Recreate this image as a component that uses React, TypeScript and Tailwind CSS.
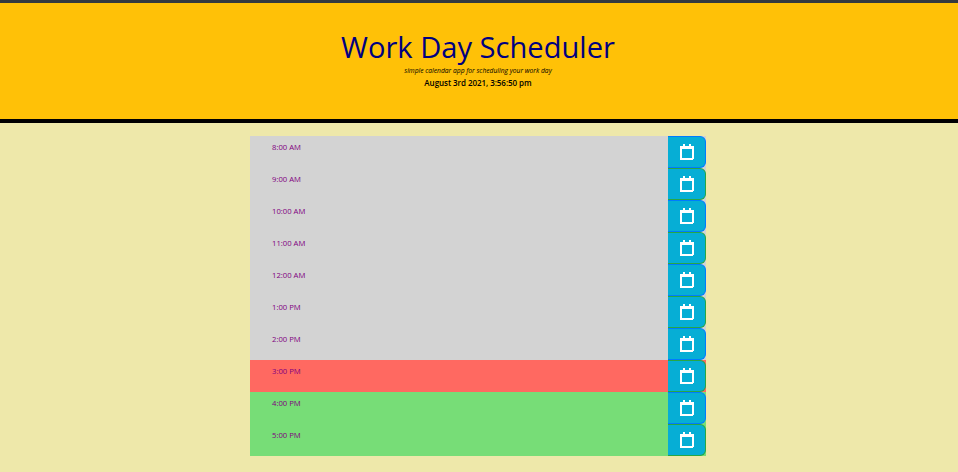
type Tense = "past" | "present" | "future";

const slots: { time: string; tense: Tense; border: string }[] = [
  { time: "8:00 AM", tense: "past", border: "border-[#007bff]" },
  { time: "9:00 AM", tense: "past", border: "border-[#28a745]" },
  { time: "10:00 AM", tense: "past", border: "border-[#007bff]" },
  { time: "11:00 AM", tense: "past", border: "border-[#28a745]" },
  { time: "12:00 AM", tense: "past", border: "border-[#007bff]" },
  { time: "1:00 PM", tense: "past", border: "border-[#28a745]" },
  { time: "2:00 PM", tense: "past", border: "border-[#007bff]" },
  { time: "3:00 PM", tense: "present", border: "border-[#28a745]" },
  { time: "4:00 PM", tense: "future", border: "border-[#007bff]" },
  { time: "5:00 PM", tense: "future", border: "border-[#28a745]" },
];

const tenseColor: Record<Tense, string> = {
  past: "bg-[#d3d3d3]",
  present: "bg-[#ff6961]",
  future: "bg-[#77dd77]",
};

function CalendarIcon() {
  return (
    <svg width="14" height="16" viewBox="0 0 14 16" fill="#fff" shapeRendering="crispEdges" aria-hidden="true">
      <path fillRule="evenodd" d="M0 2H3V0H5V2H9V0H11V2H14V15H13V16H0ZM2 5V14H12V5Z" />
    </svg>
  );
}

export default function App() {
  return (
    <div className="flex h-[472px] w-full flex-col bg-[#eee8aa] font-['Open_Sans','Noto_Sans',sans-serif]">
      <header className="flex h-[123px] flex-col items-center border-t-[3px] border-b-4 border-t-[#343a40] border-b-black bg-[#ffc107] pt-[26px] pr-[2px]">
        <h1 className="text-[29.1px] leading-[36px] whitespace-nowrap text-[#000080]">Work Day Scheduler</h1>
        <p className="mt-px text-[6.7px] leading-[10px] whitespace-nowrap text-black italic">simple calendar app for scheduling your work day</p>
        <p className="mt-px text-[8px] leading-[12px] font-semibold tracking-[-0.05px] whitespace-nowrap text-black">August 3rd 2021, 3:56:50 pm</p>
      </header>
      <main className="mx-auto mt-[13px] flex w-[456px] -translate-x-px flex-col">
        {slots.map((slot) => (
          <div key={slot.time} className={`flex h-8 justify-between ${tenseColor[slot.tense]}`}>
            <span className="pt-[6px] pl-[22px] text-[7.7px] leading-[11px] font-medium text-[#800080]">{slot.time}</span>
            <button className={`flex h-8 w-[38px] items-center justify-center rounded-r-[6px] border-y border-r bg-[#06aed5] ${slot.border}`} aria-label="Save">
              <CalendarIcon />
            </button>
          </div>
        ))}
      </main>
    </div>
  );
}
